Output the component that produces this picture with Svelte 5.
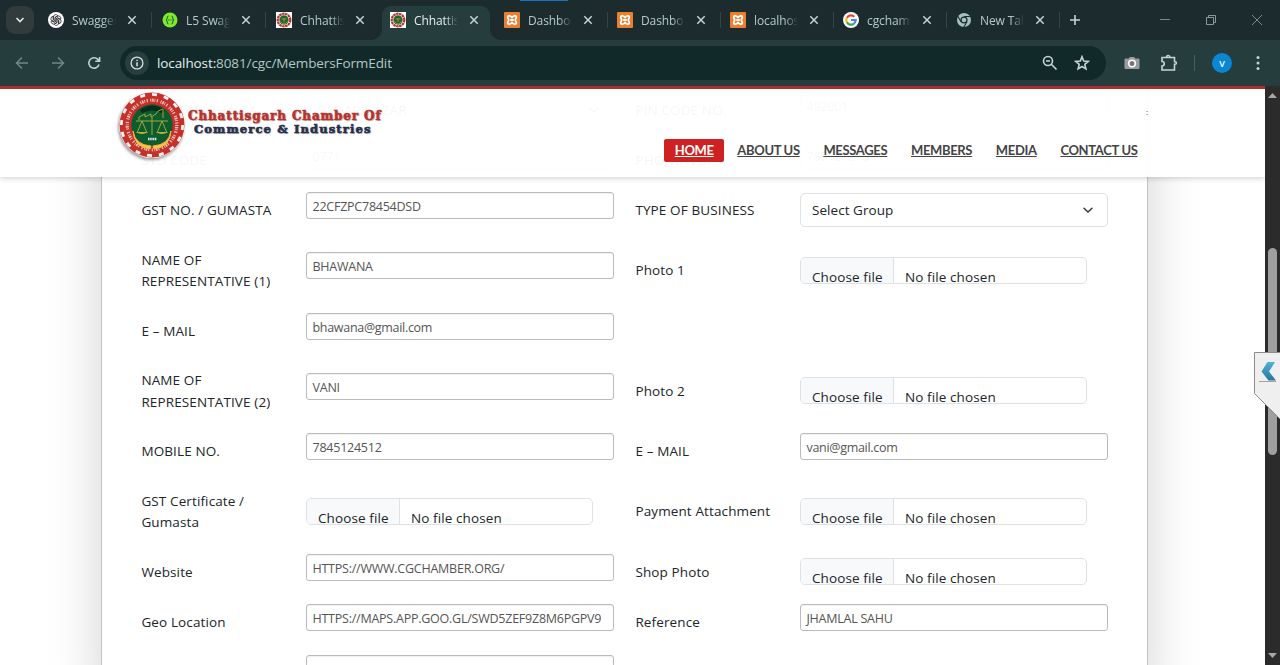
<script>
  const tabs = [
    { icon: 'gpt', title: 'Swagger UI', sep: true, w: 114 },
    { icon: 'swagger', title: 'L5 Swagger', sep: true, w: 114 },
    { icon: 'cg', title: 'Chhattisgarh', sep: false, w: 114 },
    { icon: 'cg', title: 'Chhattisgarh', active: true, w: 108 },
    { icon: 'xampp', title: 'Dashboard', sep: true, w: 113 },
    { icon: 'xampp', title: 'Dashboard', sep: true, w: 113 },
    { icon: 'xampp', title: 'localhost', sep: true, w: 113 },
    { icon: 'google', title: 'cgchamber', sep: true, w: 113 },
    { icon: 'chrome', title: 'New Tab', sep: true, w: 113 }
  ];
  const rows = [
    { h: 50, a: ['WARD / MOHALLA', 'select', 'SADAR BAZAR'], b: ['PIN CODE NO.', 'text', '492001'] },
    { h: 50, a: ['STD CODE', 'text', '0771'], b: ['PHONE NO.', 'text', '789727278'] },
    { h: 60.3, a: ['GST NO. / GUMASTA', 'text', '22CFZPC78454DSD'], b: ['TYPE OF BUSINESS', 'select', 'Select Group'] },
    { h: 60.3, a: ['NAME OF REPRESENTATIVE (1)', 'text', 'BHAWANA'], b: ['Photo 1', 'file'] },
    { h: 60.3, a: ['E – MAIL', 'text', 'bhawana@gmail.com'] },
    { h: 60.3, a: ['NAME OF REPRESENTATIVE (2)', 'text', 'VANI'], b: ['Photo 2', 'file'] },
    { h: 60.3, a: ['MOBILE NO.', 'text', '7845124512'], b: ['E – MAIL', 'text', 'vani@gmail.com'] },
    { h: 60.3, a: ['GST Certificate / Gumasta', 'file'], b: ['Payment Attachment', 'file'] },
    { h: 50.3, a: ['Website', 'text', 'HTTPS://WWW.CGCHAMBER.ORG/'], b: ['Shop Photo', 'file'] },
    { h: 50.6, a: ['Geo Location', 'text', 'HTTPS://MAPS.APP.GOO.GL/SWD5ZEF9Z8M6PGPV9'], b: ['Reference', 'text', 'JHAMLAL SAHU'] },
    { h: 50, a: ['', 'text', ''] }
  ];
  const nav = ['HOME', 'ABOUT US', 'MESSAGES', 'MEMBERS', 'MEDIA', 'CONTACT US'];
</script>

{#snippet emblem(size)}
  <svg width={size} height={size} viewBox="0 0 66 66">
    <circle cx="33" cy="33" r="32.5" fill="#c5302b" />
    <circle cx="33" cy="33" r="30.6" fill="none" stroke="#fbf3f1" stroke-width="2.8" stroke-dasharray="5 7" />
    <circle cx="33" cy="33" r="24.8" fill="none" stroke="#eec4bd" stroke-width="3.2" stroke-dasharray="1 .9 1.6 .8 .8 1.5 1.2 2.6" />
    <circle cx="33" cy="33" r="20.7" fill="#0c5c30" />
    <path d="M21 18q12-9 25 0l-3 3q-10-5-20 0z" fill="#062c1b" />
    <path d="M20 28v-3l6-3v3l6-3v3l5-3 2-3 5-2v9M17 29h32M33 25v18M23 29l-5 12M23 29l5 12M43 29l-5 12M43 29l5 12" fill="none" stroke="#a8a436" stroke-width="1" />
    <path d="M17 40h12q-6 4-12 0zM37 40h12q-6 4-12 0z" fill="#c2b337" />
    <path d="M14 39q2 14 18 15l-1 3Q15 55 14 39zM52 39q-2 14-18 15l1 3Q51 55 52 39z" fill="#f1c83e" stroke="#e9bd4a" />
    <path d="M29 47h9" stroke="#e6eee0" stroke-width="2.5" stroke-dasharray="1.5 .7" />
  </svg>
{/snippet}

{#snippet favicon(name)}
  {#if name === 'gpt'}
    <svg width="16" height="16" viewBox="0 0 16 16"><circle cx="8" cy="8" r="8" fill="#fff" /><g fill="none" stroke="#222" stroke-width=".75">{#each [0, 60, 120, 180, 240, 300] as r}<path d="M5.4 8.2V5a2.4 2.4 0 0 1 4.4-1.3L7 5.4v3.3" transform="rotate({r} 8 8)" />{/each}</g></svg>
  {:else if name === 'swagger'}
    <svg width="16" height="16" viewBox="0 0 16 16"><circle cx="8" cy="8" r="7.5" fill="#7eea2f" /><path d="M6.500 4C4.500 4 6 7.500 4 8C6 8.500 4.500 12 6.500 12M9.500 4c2 0 .5 3.500 2.500 4c-2 .5-.5 4-2.500 4" fill="none" stroke="#276b2d" stroke-width="1.1" /><path d="M6 8h4.500" stroke="#276b2d" stroke-width="1.2" stroke-dasharray="1.1 .6" /></svg>
  {:else if name === 'cg'}
    <svg width="16" height="16" viewBox="0 0 16 16"><path fill="#fff" d="M0 0h16v16H0z" /><circle cx="8" cy="8" r="6.3" fill="none" stroke="#b3322b" stroke-width="2.2" stroke-dasharray="2.5 .5" /><circle cx="8" cy="8" r="4.7" fill="#23652d" /><path d="M4.500 9.500q3.500 5 7 0M5.500 7h5M8 6v4" stroke="#94913c" fill="none" /></svg>
  {:else if name === 'xampp'}
    <svg width="16" height="16" viewBox="0 0 16 16"><rect width="16" height="16" rx="1" fill="#ee7d2c" /><path d="M8 6.200C7.500 3.300 3.700 3 3.700 5.300c0 1.300 1 1.400 1 2.700s-1 1.400-1 2.700C3.700 13 7.500 12.700 8 9.800C8.500 12.700 12.300 13 12.300 10.700c0-1.300-1-1.400-1-2.700s1-1.400 1-2.700C12.300 3 8.500 3.300 8 6.200zM6.200 8h3.600" fill="none" stroke="#fff" stroke-width="1.8" /></svg>
  {:else if name === 'google'}
    <svg width="16" height="16" viewBox="0 0 16 16"><circle cx="8" cy="8" r="8" fill="#fff" /><g fill="none" stroke-width="2.2"><path d="M11.300 4.700A4.700 4.700 0 0 0 3.900 5.700" stroke="#ea4335" /><path d="M3.900 5.700a4.700 4.700 0 0 0 0 4.600" stroke="#fbbc05" /><path d="M3.900 10.300a4.700 4.700 0 0 0 7.100 1.300" stroke="#34a853" /><path d="M11 11.600A4.700 4.700 0 0 0 12.700 8H8" stroke="#4285f4" /></g></svg>
  {:else}
    <svg width="16" height="16" viewBox="0 0 16 16"><circle cx="8" cy="8" r="7" fill="#a7c0be" /><circle cx="8" cy="8" r="3.6" fill="#1d2d2f" /><path d="M8 4.500h6.500M5 9.700L1.700 4M11 9.700L7.700 15.300" stroke="#1d2d2f" stroke-width="1.1" /><circle cx="8" cy="8" r="2.3" fill="#a7c0be" /></svg>
  {/if}
{/snippet}

{#snippet field(f)}
  <div class="label"><span>{f[0]}</span></div>
  <div class="control">
    {#if f[1] === 'text'}
      <div class="input" class:mail={f[2].includes('@')}>{f[2]}</div>
    {:else if f[1] === 'select'}
      <div class="select"><span>{f[2]}</span><svg width="12" height="12" viewBox="0 0 12 12"><path d="M2 4.200L6 8L10 4.200" fill="none" stroke="#343a40" stroke-width="1.500" stroke-linecap="round" /></svg></div>
    {:else}
      <div class="file"><span class="choose">Choose file</span><span class="none">No file chosen</span></div>
    {/if}
  </div>
{/snippet}

<div class="window">
  <div class="tabbar">
    <div class="load"></div>
    <div class="search"><svg width="12" height="12" viewBox="0 0 12 12"><path d="M2.500 4L6 7.500L9.500 4" fill="none" stroke="#dce5e4" stroke-width="1.7" /></svg></div>
    {#each tabs as t}
      <div class="tab" class:active={t.active} style="width:{t.w}px">
        {@render favicon(t.icon)}
        <span class="title">{t.title}</span>
        <svg class="x" width="10" height="10" viewBox="0 0 10 10"><path d="M1.300 1.300l7.400 7.400M8.700 1.300L1.300 8.700" stroke="#c3d6d4" stroke-width="1.5" /></svg>
        <i class:sep={t.sep}></i>
      </div>
    {/each}
    <svg class="plus" width="12" height="12" viewBox="0 0 12 12"><path d="M6 1v10M1 6h10" stroke="#c3d6d4" stroke-width="1.6" /></svg>
    <div class="winctl">
      <svg width="12" height="12" viewBox="0 0 12 12"><path d="M1 5.500h10" stroke="#79898a" /></svg>
      <svg width="12" height="12" viewBox="0 0 12 12"><path d="M1.500 3.500h7v7h-7zM3.500 3.500v-2h7v7h-2" fill="none" stroke="#8b9999" /></svg>
      <svg width="12" height="12" viewBox="0 0 12 12"><path d="M1 1l10 10M11 1L1 11" stroke="#79898a" /></svg>
    </div>
  </div>

  <div class="toolbar">
    <svg class="dim" width="14" height="14" viewBox="0 0 14 14"><path d="M13 7H1.500M7 1.500L1.500 7L7 12.500" /></svg>
    <svg class="dim" width="14" height="14" viewBox="0 0 14 14"><path d="M1 7h11.500M7 1.500L12.500 7L7 12.500" /></svg>
    <svg class="bright" width="14" height="14" viewBox="0 0 14 14"><path d="M12 8.500A5.200 5.200 0 1 1 10.800 3.400L12.500 5M12.600 1v4.300H8.300" /></svg>
    <div class="omnibox">
      <div class="info"><svg width="14" height="14" viewBox="0 0 14 14"><circle cx="7" cy="7" r="5.9" fill="none" stroke="#d5e3e1" stroke-width="1.3" /><path d="M7 6.200v4M7 3.700v1.400" stroke="#d5e3e1" stroke-width="1.5" /></svg></div>
      <div class="url"><b>localhost:</b>8081/cgc/MembersFormEdit</div>
      <svg class="bright" width="16" height="16" viewBox="0 0 16 16"><circle cx="6" cy="6" r="4.5" /><path d="M9.300 9.300L14.500 14.500M4 6h4" /></svg>
      <svg class="bright star" width="16" height="16" viewBox="0 0 16 16"><path d="M8 1.700l1.700 4.300 4.600.4-3.500 3 1.100 4.500L8 11.500l-3.900 2.400 1.100-4.500-3.500-3 4.600-.4z" /></svg>
    </div>
    <svg class="cam" width="16" height="16" viewBox="0 0 16 16"><path d="M1.500 3.500h3L6 2h4l1.500 1.500h3q1 0 1 1V13q0 1-1 1h-13q-1 0-1-1V4.500q0-1 1-1z" fill="#999d9d" /><circle cx="8" cy="8.500" r="3.3" fill="#777" stroke="#fff" stroke-width="1.6" /></svg>
    <svg class="bright puzzle" width="18" height="18" viewBox="0 0 18 18"><path d="M2 3.500h12.500v4.200h.6a1.300 1.300 0 0 1 0 2.600h-.6V16H2v-4a2.200 2.200 0 0 0 0-4.500z" /><path d="M6.500 3.200a1.700 1.700 0 0 1 3.400 0" /></svg>
    <i class="bar"></i>
    <div class="avatar">V</div>
    <svg class="dots" width="4" height="16" viewBox="0 0 4 16" fill="#c3d6d4"><circle cx="2" cy="2.5" r="1.5" /><circle cx="2" cy="8" r="1.5" /><circle cx="2" cy="13.5" r="1.5" /></svg>
  </div>

  <div class="view">
    <main>
      <div class="sheet">
        {#each rows as r}
          <div class="row" style="height:{r.h}px">
            {@render field(r.a)}
            {#if r.b}{@render field(r.b)}{/if}
          </div>
        {/each}
      </div>
      <header>
        <div class="brand">
          <div class="logo">{@render emblem(66)}</div>
          <div class="name"><div class="l1">Chhattisgarh Chamber Of</div><div class="l2">Commerce &amp; Industries</div></div>
        </div>
        <div class="right">
          <span class="colon">:</span>
          <nav>{#each nav as n, i}<a class:on={i === 0} href="#top">{n}</a>{/each}</nav>
        </div>
      </header>
    </main>
    <div class="scroll">
      <svg width="9" height="5" viewBox="0 0 9 5"><path d="M0 5L4.500 0L9 5z" fill="#a6a6a6" /></svg>
      <div class="thumb"></div>
      <svg class="down" width="9" height="5" viewBox="0 0 9 5"><path d="M0 0L4.500 5L9 0z" fill="#a6a6a6" /></svg>
    </div>
    <svg class="flyout" width="26" height="68" viewBox="0 0 26 68">
      <defs><linearGradient id="blue" x2="0" y2="1"><stop stop-color="#55afd5" /><stop offset="1" stop-color="#27769e" /></linearGradient></defs>
      <path d="M.5 .5H27V68L.5 41.500z" fill="#efefef" stroke="#8c8c8c" />
      <path d="M13.500 10h7.500l-6 9.500 7 9h-7.500l-7-9z" fill="url(#blue)" /><path d="M5 29.500h17" stroke="#a79f98" />
    </svg>
  </div>
</div>

<style>
  :global(body) { overflow: hidden; }
  .window { width: 1280px; height: 665px; display: flex; flex-direction: column; overflow: hidden; font-family: "Open Sans", "Noto Sans", sans-serif; background: #263d3e; }
  .tabbar { position: relative; height: 40px; background: #1c2c2e; display: flex; align-items: center; flex: none; }
  .load { position: absolute; left: 520px; top: 0; width: 48px; height: 1px; background: #1676c0; }
  .search { width: 28px; height: 28px; margin: 0 8px 0 6px; border-radius: 9px; background: #323b3b; display: flex; align-items: center; justify-content: center; flex: none; }
  .tab { position: relative; height: 40px; padding-left: 6px; box-sizing: border-box; display: flex; align-items: center; flex: none; }
  .title { width: 44px; margin-left: 8px; overflow: hidden; white-space: nowrap; font-size: 12px; letter-spacing: -.1px; color: #b5c9c7; mask-image: linear-gradient(90deg, #000 70%, transparent); }
  .x { margin-left: 10.5px; }
  i.sep { width: 1px; height: 16px; background: #354547; margin-left: 14px; }
  .tab.active { height: 34px; margin: 6px 8px 0 -2px; padding: 0 0 6px 8px; border-radius: 9px 9px 0 0; background: #263d3e; }
  .tab.active::before, .tab.active::after { content: ""; position: absolute; bottom: 0; width: 10px; height: 10px; background: radial-gradient(circle at 0 0, transparent 9.5px, #263d3e 10px); left: -10px; }
  .tab.active::after { left: auto; right: -10px; background: radial-gradient(circle at 100% 0, transparent 9.5px, #263d3e 10px); }
  .tab.active .title { color: #e3eeec; }
  .plus { margin-left: 6px; }
  .winctl { margin-left: auto; margin-right: 17px; display: flex; gap: 34px; }
  .toolbar { height: 46px; display: flex; align-items: center; flex: none; padding-left: 15px; }
  .toolbar svg { flex: none; }
  .dim { margin-right: 22px; fill: none; stroke: #71878a; stroke-width: 1.5; }
  .bright { fill: none; stroke: #c3d6d4; stroke-width: 1.6; }
  .omnibox { width: 986px; height: 34px; margin-left: 19px; border-radius: 17px; background: #112929; display: flex; align-items: center; padding: 0 16px 0 5px; box-sizing: border-box; flex: none; }
  .info { width: 24px; height: 24px; border-radius: 50%; background: #283f3f; display: flex; align-items: center; justify-content: center; }
  .url { flex: 1; margin-left: 8px; font-size: 13.5px; letter-spacing: -.1px; color: #b5c7c5; }
  .url b { font-weight: 400; color: #e5efed; }
  .star { margin-left: 16px; }
  .cam { margin-left: 18px; }
  .puzzle { margin-left: 20px; }
  .bar { width: 1px; height: 16px; background: #47605f; margin: 0 17px 0 16px; }
  .avatar { width: 20px; height: 20px; border-radius: 50%; background: #0a86d3; color: #fff; font-size: 9px; font-weight: 600; display: flex; align-items: center; justify-content: center; }
  .dots { margin-left: 24px; }
  .view { position: relative; flex: 1; display: flex; min-height: 0; }
  main { position: relative; width: 1265px; background: #fff; overflow: hidden; }
  .sheet { width: 1047px; margin-left: 101px; padding: 6px 0 0 39px; box-sizing: border-box; border: solid #c4c4c4; border-width: 0 1px; background: #fff; box-shadow: 0 0 50px rgba(0,0,0,.18); }
  .row { display: grid; grid-template-columns: 165px 329px 165px 308px; }
  .label { height: 37.4px; display: flex; align-items: center; font-size: 13.5px; line-height: 21.5px; color: #212529; letter-spacing: .12px; padding-left: .4px; }
  .label span { width: 145px; }
  .input { width: 308px; height: 27px; box-sizing: border-box; border: 1px solid #bbb; border-radius: 3px; padding-left: 5.5px; font-size: 12.5px; line-height: 27px; letter-spacing: -.24px; color: #555; white-space: nowrap; box-shadow: inset 0 1px 1px rgba(0,0,0,.06); }
  .input.mail { letter-spacing: -.3px; }
  .select { width: 308px; height: 34px; margin-top: 1px; box-sizing: border-box; border: 1px solid #dee2e6; border-radius: 5px; padding: 0 13px 0 11px; display: flex; align-items: center; justify-content: space-between; font-size: 13.5px; color: #212529; letter-spacing: .05px; }
  .file { width: 287px; height: 27px; margin-top: 4.5px; box-sizing: border-box; border: 1px solid #dee2e6; border-radius: 5px; overflow: hidden; display: flex; font-size: 13.5px; line-height: 39.5px; letter-spacing: .1px; color: #212529; white-space: nowrap; }
  .choose { width: 93px; box-sizing: border-box; padding-left: 11px; background: #f8f9fa; border-right: 1px solid #dee2e6; }
  .none { padding-left: 11px; }
  header { position: absolute; inset: 0 0 auto 0; height: 91px; box-sizing: border-box; border-top: 3px solid #b02d2d; background: rgba(255,255,255,.96); box-shadow: 0 1px 6px rgba(0,0,0,.2); display: flex; justify-content: space-between; padding: 0 127px 0 119px; }
  .brand { display: flex; }
  .logo { margin-top: 3px; width: 66px; height: 66px; border-radius: 50%; box-shadow: -1px 2px 3px rgba(0,0,0,.4); }
  .name { padding: 21px 0 0 3px; font-family: "DejaVu Serif", serif; font-weight: 900; line-height: 13px; white-space: nowrap; text-shadow: 1px 1px 1px rgba(0,0,0,.35); -webkit-text-stroke: .6px; }
  .l1 { font-size: 12px; color: #b9312e; letter-spacing: .87px; }
  .l2 { font-size: 11.5px; color: #24304d; padding-left: 6px; letter-spacing: 1.15px; }
  .right { display: flex; flex-direction: column; align-items: flex-end; }
  .colon { font-size: 8px; line-height: 12px; margin: 17px -10px 0 0; color: #444; }
  nav { display: flex; margin-top: 21px; }
  nav a { font-family: Lato, sans-serif; font-size: 13px; line-height: 23px; color: #444; font-weight: 700; margin-left: 23.7px; letter-spacing: -.34px; }
  nav a:last-child { margin-right: .5px; }
  nav a.on { background: #cd2122; color: #fff; border-radius: 2px; padding: 0 10.7px; margin: 0 -10.7px 0 0; }
  .scroll { width: 15px; background: #2b2b2b; display: flex; flex-direction: column; align-items: center; padding-top: 7px; box-sizing: border-box; }
  .thumb { width: 9px; height: 207px; margin-top: 150px; border-radius: 5px; background: #9f9f9f; }
  .down { margin-top: auto; margin-bottom: 7px; }
  .flyout { position: absolute; right: 0; top: 266px; }
</style>
